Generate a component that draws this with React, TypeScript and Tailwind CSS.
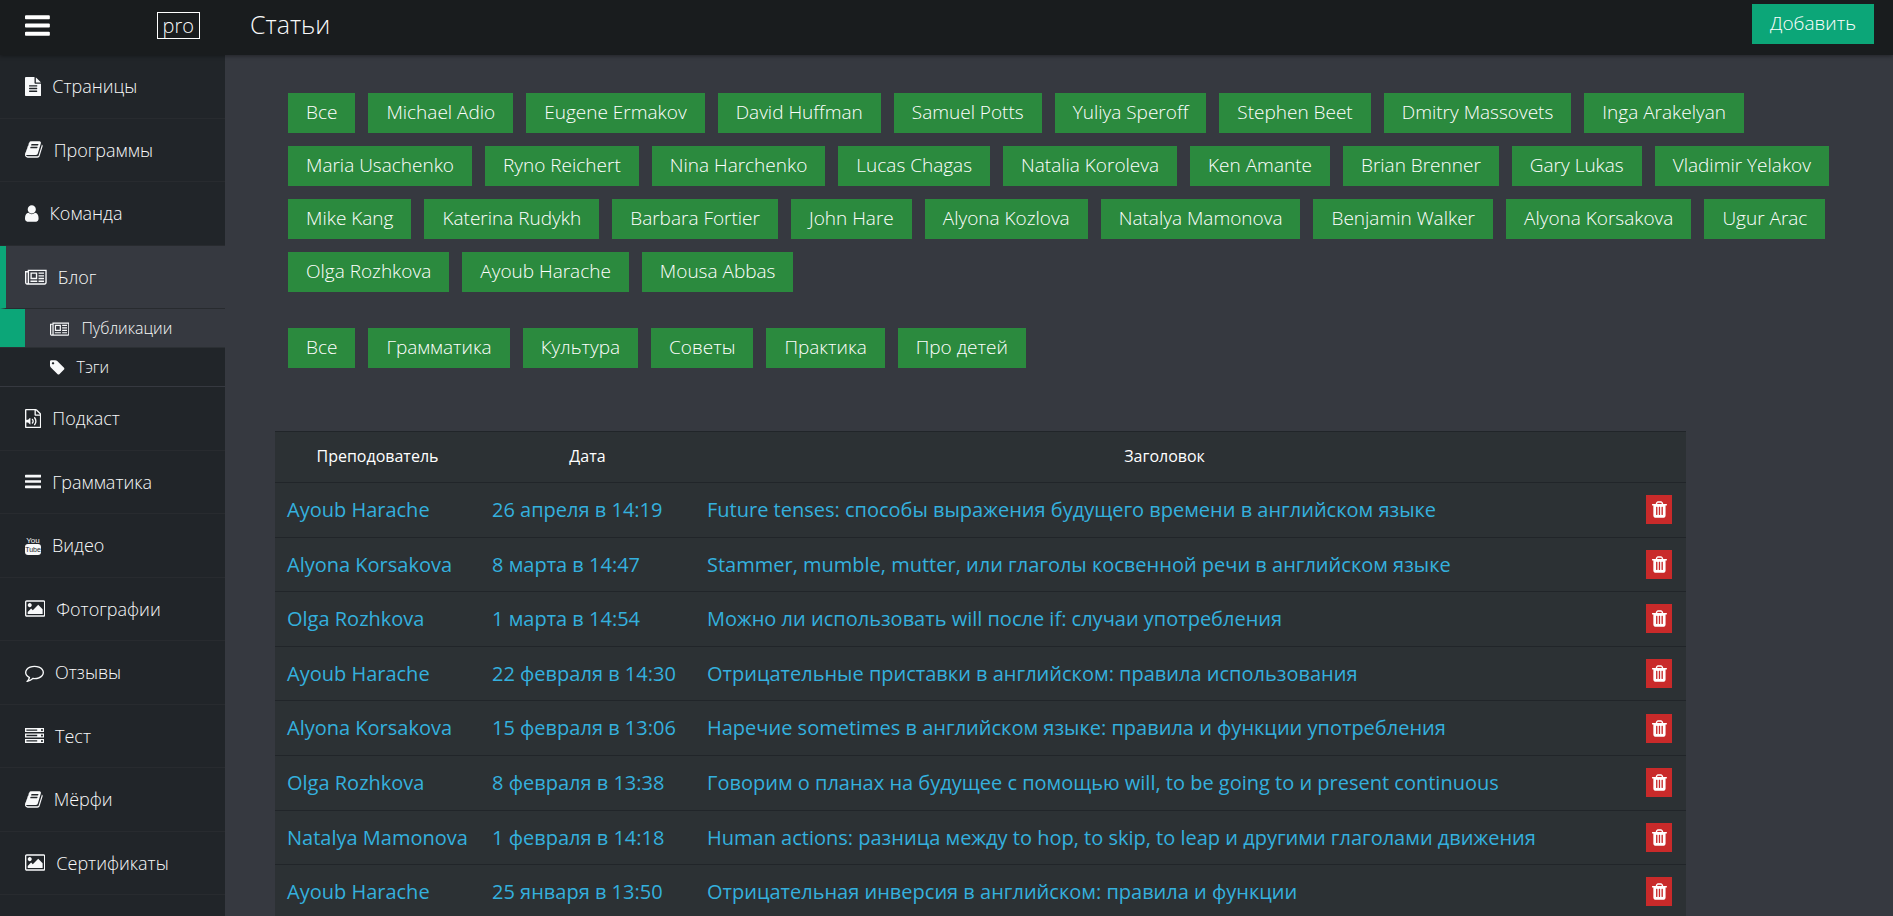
import type { ReactNode } from "react";

const PATHS = {
  bars: "M1664 1344v128q0 26-19 45t-45 19h-1408q-26 0-45-19t-19-45v-128q0-26 19-45t45-19h1408q26 0 45 19t19 45zm0-512v128q0 26-19 45t-45 19h-1408q-26 0-45-19t-19-45v-128q0-26 19-45t45-19h1408q26 0 45 19t19 45zm0-512v128q0 26-19 45t-45 19h-1408q-26 0-45-19t-19-45v-128q0-26 19-45t45-19h1408q26 0 45 19t19 45z",
  book: "M1703 478q40 57 18 129l-275 906q-19 64-76.5 107.5t-122.5 43.5h-923q-77 0-148.5-53.5t-99.5-131.5q-24-67-2-127 0-4 3-27t4-37q1-8-3-21.5t-3-19.5q2-11 8-21t16.5-23.5 16.5-23.5q23-38 45-91.5t30-91.5q3-10 .5-30t-.5-28q3-11 17-28t17-23q21-36 42-92t25-90q1-9-2.5-32t.5-28q4-13 22-30.5t22-22.5q19-26 42.5-84.5t27.5-96.5q1-8-3-25.5t-2-26.5q2-8 9-18t18-23 17-21q8-12 16.5-30.5t15-35 16-36 19.5-32 26.5-23.5 36-11.5 47.5 5.5l-1 3q38-9 51-9h761q74 0 114 56t18 130l-274 906q-36 119-71.5 153.5t-128.5 34.5h-869q-27 0-38 15-11 16-1 43 24 70 144 70h923q29 0 56-15.5t35-41.5l300-987q7-22 5-57 38 15 59 43zm-1064 2q-4 13 2 22.5t20 9.5h608q13 0 25.5-9.5t16.5-22.5l21-64q4-13-2-22.5t-20-9.5h-608q-13 0-25.5 9.5t-16.5 22.5zm-83 256q-4 13 2 22.5t20 9.5h608q13 0 25.5-9.5t16.5-22.5l21-64q4-13-2-22.5t-20-9.5h-608q-13 0-25.5 9.5t-16.5 22.5z",
  user: "M1536 1399q0 109-62.5 187t-150.5 78h-854q-88 0-150.5-78t-62.5-187q0-85 8.5-160.5t31.5-152 58.5-131 94-89 134.5-34.5q131 128 313 128t313-128q76 0 134.5 34.5t94 89 58.5 131 31.5 152 8.5 160.5zm-256-887q0 159-112.5 271.5t-271.5 112.5-271.5-112.5-112.5-271.5 112.5-271.5 271.5-112.5 271.5 112.5 112.5 271.5z",
  fileText: "M1596 476q14 14 28 36h-472v-472q22 14 36 28zm-476 164h544v1056q0 40-28 68t-68 28h-1344q-40 0-68-28t-28-68v-1600q0-40 28-68t68-28h800v544q0 40 28 68t68 28zm160 736v-64q0-14-9-23t-23-9h-704q-14 0-23 9t-9 23v64q0 14 9 23t23 9h704q14 0 23-9t9-23zm0-256v-64q0-14-9-23t-23-9h-704q-14 0-23 9t-9 23v64q0 14 9 23t23 9h704q14 0 23-9t9-23zm0-256v-64q0-14-9-23t-23-9h-704q-14 0-23 9t-9 23v64q0 14 9 23t23 9h704q14 0 23-9t9-23z",
  newspaper: "M1024 512h-384v384h384v-384zm128 640v128h-640v-128h640zm0-768v640h-640v-640h640zm640 768v128h-512v-128h512zm0-256v128h-512v-128h512zm0-256v128h-512v-128h512zm0-256v128h-512v-128h512zm-1536 960v-960h-128v960q0 26 19 45t45 19 45-19 19-45zm1664 0v-1088h-1536v1088q0 33-11 64h1483q26 0 45-19t19-45zm128-1216v1216q0 80-56 136t-136 56h-1664q-80 0-136-56t-56-136v-1088h256v-128h1792z",
  tag: "M576 448q0-53-37.5-90.5t-90.5-37.5-90.5 37.5-37.5 90.5 37.5 90.5 90.5 37.5 90.5-37.5 37.5-90.5zm1067 576q0 53-37 90l-491 492q-39 37-91 37-53 0-90-37l-715-716q-38-37-64.5-101t-26.5-117v-416q0-52 38-90t90-38h416q53 0 117 26.5t102 64.5l715 714q37 39 37 91z",
  fileAudio: "M1596 380q28 28 48 76t20 88v1152q0 40-28 68t-68 28h-1344q-40 0-68-28t-28-68v-1600q0-40 28-68t68-28h896q40 0 88 20t76 48zm-444-244v376h376q-10-29-22-41l-313-313q-12-12-41-22zm384 1528v-1024h-416q-40 0-68-28t-28-68v-416h-768v1536h1280zM620 850q20 8 20 30v544q0 22-20 30-8 2-12 2-12 0-23-9l-166-167h-131q-14 0-23-9t-9-23v-192q0-14 9-23t23-9h131l166-167q16-15 35-7zm417 689q31 0 50-24 129-159 129-363t-129-363q-16-21-43-24t-47 14q-21 17-23.5 43.5t14.5 47.5q100 123 100 282t-100 282q-17 21-14.5 47.5t23.5 42.5q18 15 40 15zm-211-148q27 0 47-20 87-93 87-219t-87-219q-18-19-45-20t-46 17-20 44.5 18 46.5q52 57 52 131t-52 131q-19 20-18 46.5t20 44.5q20 17 44 17z",
  picture: "M576 576q0 80-56 136t-136 56-136-56-56-136 56-136 136-56 136 56 56 136zm1024 384v448h-1408v-192l320-320 160 160 512-512zm96-704h-1600q-13 0-22.5 9.5t-9.5 22.5v1216q0 13 9.5 22.5t22.5 9.5h1600q13 0 22.5-9.5t9.5-22.5v-1216q0-13-9.5-22.5t-22.5-9.5zm160 32v1216q0 66-47 113t-113 47h-1600q-66 0-113-47t-47-113v-1216q0-66 47-113t113-47h1600q66 0 113 47t47 113z",
  comment: "M896 384q-204 0-381.5 69.5t-282 187.5-104.5 255q0 112 71.5 213.5t201.5 175.5l87 50-27 96q-24 91-70 172 152-63 275-171l43-38 57 6q69 8 130 8 204 0 381.5-69.5t282-187.5 104.5-255-104.5-255-282-187.5-381.5-69.5zm896 512q0 174-120 321.5t-326 233-450 85.5q-70 0-145-8-198 175-460 242-49 14-114 22h-5q-15 0-27-10.5t-16-27.5v-1q-3-4-.5-12t2-10 4.5-9.5l6-9 7-8.5 8-9q7-8 31-34.5t34.5-38 31-39.5 32.5-51 27-59 26-76q-157-89-247.5-220t-90.5-281q0-174 120-321.5t326-233 450-85.5 450 85.5 326 233 120 321.5z",
  server: "M128 1408h1024v-128h-1024v128zm0-512h1024v-128h-1024v128zm1568 448q0-40-28-68t-68-28-68 28-28 68 28 68 68 28 68-28 28-68zm-1568-960h1024v-128h-1024v128zm1568 448q0-40-28-68t-68-28-68 28-28 68 28 68 68 28 68-28 28-68zm0-512q0-40-28-68t-68-28-68 28-28 68 28 68 68 28 68-28 28-68zm96 832v384h-1792v-384h1792zm0-512v384h-1792v-384h1792zm0-512v384h-1792v-384h1792z",
  trash: "M704 1376v-704q0-14-9-23t-23-9h-64q-14 0-23 9t-9 23v704q0 14 9 23t23 9h64q14 0 23-9t9-23zm256 0v-704q0-14-9-23t-23-9h-64q-14 0-23 9t-9 23v704q0 14 9 23t23 9h64q14 0 23-9t9-23zm256 0v-704q0-14-9-23t-23-9h-64q-14 0-23 9t-9 23v704q0 14 9 23t23 9h64q14 0 23-9t9-23zm-544-992h448l-48-117q-7-9-17-11h-317q-10 2-17 11zm928 32v64q0 14-9 23t-23 9h-96v948q0 83-47 143.5t-113 60.5h-832q-66 0-113-58.5t-47-141.5v-952h-96q-14 0-23-9t-9-23v-64q0-14 9-23t23-9h309l70-167q15-37 54-63t79-26h320q40 0 79 26t54 63l70 167h309q14 0 23 9t9 23z",
};

type IconName = keyof typeof PATHS;

/* Left edge, top and width of each glyph on the 1792-unit grid. */
const BOX: Record<IconName, [number, number, number]> = {
  bars: [128, 0, 1536],
  book: [64, 0, 1664],
  user: [256, 0, 1280],
  fileText: [128, 0, 1536],
  newspaper: [0, -128, 2048],
  tag: [128, 0, 1536],
  fileAudio: [128, 0, 1536],
  picture: [-64, 0, 1920],
  comment: [0, 0, 1792],
  server: [0, -64, 1792],
  trash: [192, 0, 1408],
};

function Icon({ name, className }: { name: IconName; className: string }) {
  const [x, y, w] = BOX[name];
  return (
    <svg viewBox={`${x} ${y} ${w} 1792`} fill="currentColor" fillRule="evenodd" className={`w-auto shrink-0 ${className}`} aria-hidden="true">
      <path d={PATHS[name]} />
    </svg>
  );
}

function YoutubeIcon() {
  return (
    <svg viewBox="0 0 16 20" fill="currentColor" className="h-5 w-auto shrink-0" aria-hidden="true">
      <text x="8" y="8" textAnchor="middle" fontFamily="Liberation Sans Narrow, Liberation Sans, sans-serif" fontSize="8" fontWeight="400">You</text>
      <rect x="0" y="9" width="16" height="11" rx="3" />
      <text x="8" y="17" textAnchor="middle" fontFamily="Liberation Sans Narrow, Liberation Sans, sans-serif" fontSize="7" fontWeight="400" fill="#212529">Tube</text>
    </svg>
  );
}

function NavItem({ icon, label, active = false }: { icon: ReactNode; label: string; active?: boolean }) {
  return (
    <a
      href="#"
      className={`flex items-center gap-[11px] border-b border-[#282b2f] py-5 pr-4 text-lg leading-tight ${
        active ? "border-l-[6px] border-l-[#0ca678] bg-[#363940] pl-[19px]" : "pl-[25px]"
      }`}
    >
      {icon}
      {label}
    </a>
  );
}

const teachers = [
  "Все", "Michael Adio", "Eugene Ermakov", "David Huffman", "Samuel Potts", "Yuliya Speroff", "Stephen Beet",
  "Dmitry Massovets", "Inga Arakelyan", "Maria Usachenko", "Ryno Reichert", "Nina Harchenko", "Lucas Chagas",
  "Natalia Koroleva", "Ken Amante", "Brian Brenner", "Gary Lukas", "Vladimir Yelakov", "Mike Kang",
  "Katerina Rudykh", "Barbara Fortier", "John Hare", "Alyona Kozlova", "Natalya Mamonova", "Benjamin Walker",
  "Alyona Korsakova", "Ugur Arac", "Olga Rozhkova", "Ayoub Harache", "Mousa Abbas",
];

const topics = ["Все", "Грамматика", "Культура", "Советы", "Практика", "Про детей"];

const articles = [
  ["Ayoub Harache", "26 апреля в 14:19", "Future tenses: способы выражения будущего времени в английском языке"],
  ["Alyona Korsakova", "8 марта в 14:47", "Stammer, mumble, mutter, или глаголы косвенной речи в английском языке"],
  ["Olga Rozhkova", "1 марта в 14:54", "Можно ли использовать will после if: случаи употребления"],
  ["Ayoub Harache", "22 февраля в 14:30", "Отрицательные приставки в английском: правила использования"],
  ["Alyona Korsakova", "15 февраля в 13:06", "Наречие sometimes в английском языке: правила и функции употребления"],
  ["Olga Rozhkova", "8 февраля в 13:38", "Говорим о планах на будущее с помощью will, to be going to и present continuous"],
  ["Natalya Mamonova", "1 февраля в 14:18", "Human actions: разница между to hop, to skip, to leap и другими глаголами движения"],
  ["Ayoub Harache", "25 января в 13:50", "Отрицательная инверсия в английском: правила и функции"],
];

function Filters({ items }: { items: string[] }) {
  return (
    <div className="flex flex-wrap gap-[13px]">
      {items.map((item) => (
        <button key={item} type="button" className="h-10 bg-[#2b8a3e] px-[18px] pb-px text-[19px] leading-none font-light text-white">
          {item}
        </button>
      ))}
    </div>
  );
}

export default function App() {
  const size = "h-[19px]";
  return (
    <div className="flex h-screen flex-col overflow-hidden bg-[#363940] font-['Open_Sans','Noto_Sans',sans-serif] font-light text-[#f8f9fa]">
      <header className="z-10 flex h-[55px] shrink-0 bg-[#191c1e] shadow-[0_1px_4px_rgba(0,0,0,0.4)]">
        <div className="flex w-[225px] shrink-0 items-start justify-between pl-[25px] pr-[25px]">
          <button type="button" aria-label="Меню" className="pt-[11px] text-white">
            <Icon name="bars" className="h-[29px]" />
          </button>
          <a href="#" className="mt-3 border border-white px-[5px] text-xl leading-[25px]">pro</a>
        </div>
        <div className="flex grow items-start justify-between pr-[19px] pl-[25px]">
          <h1 className="text-[25px] leading-[48px]">Статьи</h1>
          <button type="button" className="mt-1 h-10 bg-[#0ca678] px-[18px] pb-px text-[19px] leading-none font-light text-white">Добавить</button>
        </div>
      </header>
      <div className="flex min-h-0 grow">
        <nav className="w-[225px] shrink-0 overflow-hidden bg-[#212529]">
          <NavItem icon={<Icon name="fileText" className={size} />} label="Страницы" />
          <NavItem icon={<Icon name="book" className={size} />} label="Программы" />
          <NavItem icon={<Icon name="user" className={size} />} label="Команда" />
          <NavItem icon={<Icon name="newspaper" className={size} />} label="Блог" active />
          <div className="border-b border-[#363940] text-base leading-[38px]">
            <div className="border-b border-[#2c3034]">
              <a href="#" className="flex items-center gap-3 border-l-[25px] border-l-[#0ca678] bg-[#363940] pl-[25px]">
                <Icon name="newspaper" className="h-[17px]" />
                Публикации
              </a>
            </div>
            <a href="#" className="flex items-center gap-3 pl-[50px]">
              <Icon name="tag" className="h-[17px]" />
              Тэги
            </a>
          </div>
          <NavItem icon={<Icon name="fileAudio" className={size} />} label="Подкаст" />
          <NavItem icon={<Icon name="bars" className={size} />} label="Грамматика" />
          <NavItem icon={<YoutubeIcon />} label="Видео" />
          <NavItem icon={<Icon name="picture" className={size} />} label="Фотографии" />
          <NavItem icon={<Icon name="comment" className={size} />} label="Отзывы" />
          <NavItem icon={<Icon name="server" className={size} />} label="Тест" />
          <NavItem icon={<Icon name="book" className={size} />} label="Мёрфи" />
          <NavItem icon={<Icon name="picture" className={size} />} label="Сертификаты" />
        </nav>
        <main className="min-w-0 grow overflow-hidden px-[50px]">
          <div className="flex flex-col gap-9 px-[13px] pt-[38px]">
            <Filters items={teachers} />
            <Filters items={topics} />
          </div>
          <table className="mt-[63px] w-[90%] border-t border-[#212529] bg-[#2c3134] text-xl font-normal text-[#34b0de]">
            <thead>
              <tr className="border-b border-[#212529] text-base text-white">
                <th scope="col" className="w-[205px] pt-3 pb-[14px] font-medium">Преподователь</th>
                <th scope="col" className="w-[215px] pt-3 pb-[14px] font-medium">Дата</th>
                <th scope="col" className="pt-3 pb-[14px] font-medium">Заголовок</th>
                <td className="w-[52px]" />
              </tr>
            </thead>
            <tbody className="leading-[1.48]">
              {articles.map(([teacher, date, title]) => (
                <tr key={date} className="border-b border-[#212529] whitespace-nowrap">
                  <td className="px-3 py-3"><a href="#">{teacher}</a></td>
                  <td className="px-3"><a href="#">{date}</a></td>
                  <td className="px-3"><a href="#">{title}</a></td>
                  <td className="px-3">
                    <button type="button" aria-label="Удалить" className="flex h-[29px] w-[26px] items-center justify-center bg-[#c92a2a] text-white">
                      <Icon name="trash" className="h-[19px]" />
                    </button>
                  </td>
                </tr>
              ))}
            </tbody>
          </table>
        </main>
      </div>
    </div>
  );
}
